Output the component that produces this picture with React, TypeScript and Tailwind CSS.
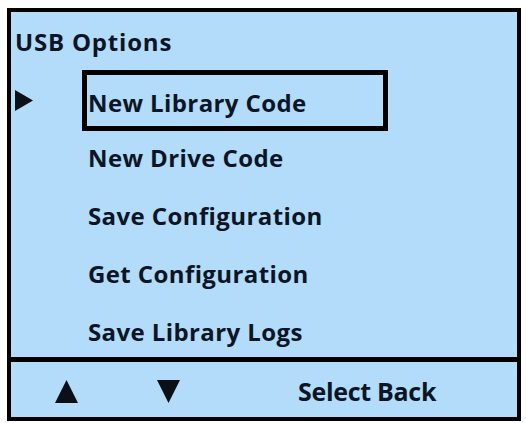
import React from "react";

const items = [
  "New Library Code",
  "New Drive Code",
  "Save Configuration",
  "Get Configuration",
  "Save Library Logs",
];

function Tri({ dir, className }: { dir: "up" | "down" | "right"; className?: string }) {
  const pts =
    dir === "up" ? "12,0 24,24 0,24" : dir === "down" ? "0,0 24,0 12,24" : "0,0 18,10.5 0,21";
  const vb = dir === "right" ? "0 0 18 21" : "0 0 24 24";
  return (
    <svg viewBox={vb} className={className}>
      <polygon points={pts} fill="#0b0f17" />
    </svg>
  );
}

export default function App() {
  const selected = 0;
  return (
    <div
      className="w-[526px] h-[423px] bg-white pt-[8px] pl-[7px] [font-variant-ligatures:none]"
      style={{ fontFamily: "'Open Sans', Lato, sans-serif" }}
    >
      <div className="w-[514px] h-[413px] border-[4px] border-black bg-[#b3dbfa] flex flex-col text-[#0b1526] font-bold">
        <div className="h-[345px] shrink-0 flex flex-col">
          <div className="h-[59px] shrink-0 flex items-center pl-[4px] text-[24px] tracking-[0.8px]">USB Options</div>
          {items.map((label, i) => (
            <div key={label} className="h-[58px] shrink-0 flex items-center text-[24px] tracking-[0.4px]">
              <div className="w-[71px] shrink-0 pl-[4px] flex items-center">
                {i === selected && <Tri dir="right" className="w-[18px] h-[21px]" />}
              </div>
              {i === selected ? (
                <div className="w-[306px] h-[61px] shrink-0 border-[5px] border-black flex items-center pl-[1px] pt-[5px]">
                  {label}
                </div>
              ) : (
                <div className="pl-[6px]">{label}</div>
              )}
            </div>
          ))}
        </div>
        <div className="flex-1 border-t-[5px] border-black flex items-center pt-[4px] text-[25px] tracking-[-0.3px]">
          <Tri dir="up" className="ml-[44px] w-[23px] h-[23px]" />
          <Tri dir="down" className="ml-[79px] w-[23px] h-[23px]" />
          <div className="ml-[118px]">Select Back</div>
        </div>
      </div>
    </div>
  );
}
